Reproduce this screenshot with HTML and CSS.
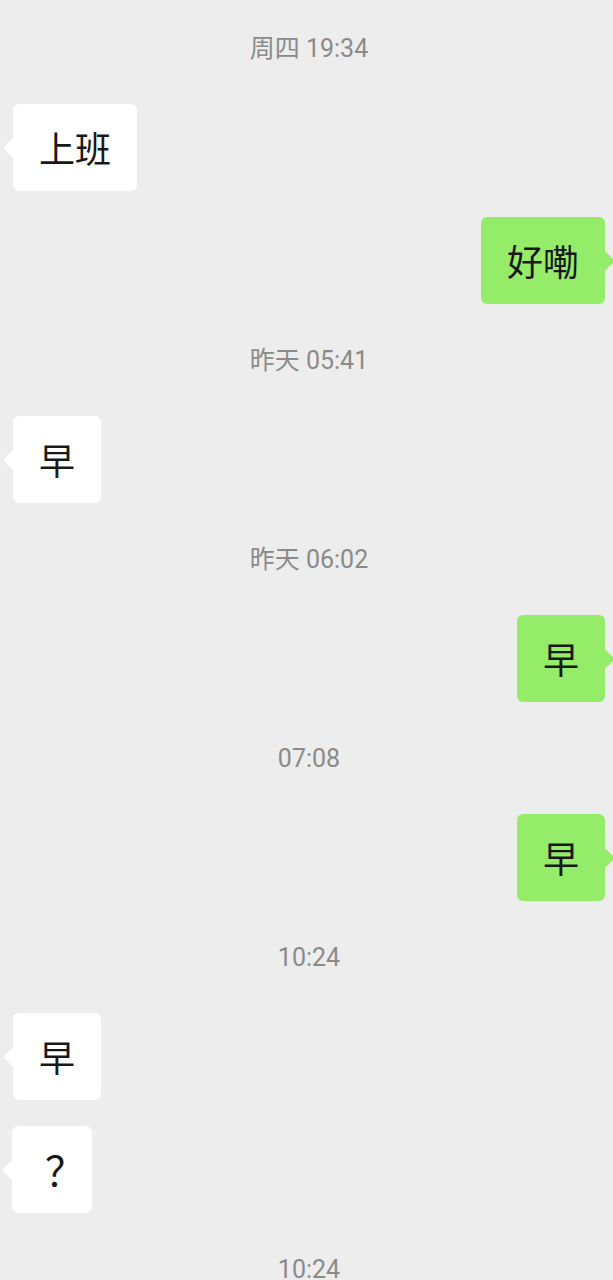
FILE: index.html
```html
<!DOCTYPE html>
<html lang="zh-CN">
<head>
<meta charset="utf-8">
<title>Chat</title>
<link rel="stylesheet" href="styles.css">
</head>
<body>
<div class="chat">
  <div class="time first">周四 19:34</div>
  <div class="row left"><div class="bubble">上班</div></div>
  <div class="row right next"><div class="bubble">好嘞</div></div>
  <div class="time">昨天 05:41</div>
  <div class="row left"><div class="bubble">早</div></div>
  <div class="time">昨天 06:02</div>
  <div class="row right"><div class="bubble">早</div></div>
  <div class="time">07:08</div>
  <div class="row right"><div class="bubble">早</div></div>
  <div class="time">10:24</div>
  <div class="row left"><div class="bubble">早</div></div>
  <div class="row left next"><div class="bubble q">？</div></div>
  <div class="time">10:24</div>
</div>
</body>
</html>
```
FILE: styles.css
```css
html, body {
  margin: 0;
  padding: 0;
  background: #ededed;
}
body {
  width: 613px;
  height: 1280px;
  overflow: hidden;
  font-family: Roboto, "Noto Sans CJK SC", sans-serif;
}
.chat {
  display: flex;
  flex-direction: column;
  padding: 0 8px 0 13px;
}
.time {
  height: 28px;
  line-height: 28px;
  margin: 43px 0 41px;
  text-align: center;
  font-size: 25px;
  color: #8a8a8a;
}
.time.first {
  margin-top: 35px;
}
.row {
  display: flex;
}
.row.left {
  justify-content: flex-start;
}
.row.right {
  justify-content: flex-end;
}
.row.next {
  margin-top: 26px;
}
.bubble {
  position: relative;
  padding: 22px 26px;
  font-size: 36px;
  line-height: 43px;
  color: #181818;
  border-radius: 6px;
  font-family: "Noto Sans CJK SC", sans-serif;
}
.left .bubble {
  background: #ffffff;
}
.right .bubble {
  background: #95ec69;
}
.bubble::before {
  content: "";
  position: absolute;
  top: 50%;
  width: 14px;
  height: 14px;
  margin-top: -7px;
  border-radius: 2px;
  transform: rotate(45deg);
}
.left .bubble::before {
  left: -7px;
  background: #ffffff;
}
.right .bubble::before {
  right: -7px;
  background: #95ec69;
}
.bubble.q {
  margin-left: -1px;
  padding-left: 33px;
  padding-right: 19px;
  font-size: 40px;
  letter-spacing: -12px;
}
```
